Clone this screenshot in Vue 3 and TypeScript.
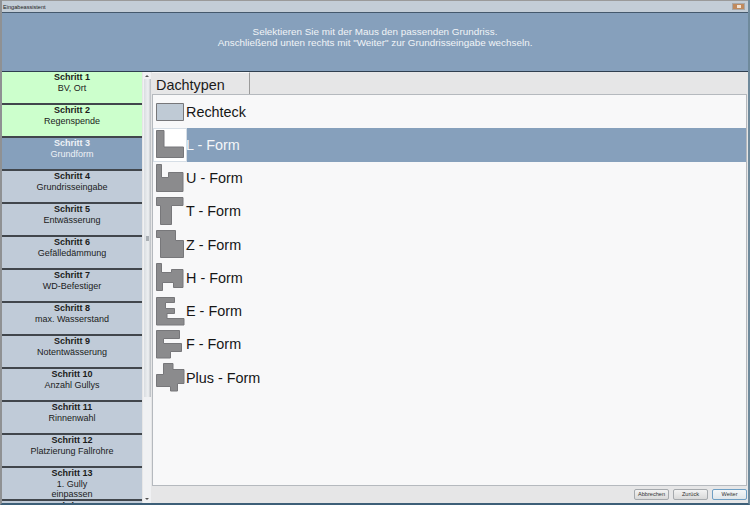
<script setup lang="ts">
interface Shape { name: string; path: string }
const steps: { title: string; lines: string[]; state: string }[] = [
  { title: 'Schritt 1', lines: ['BV, Ort'], state: 'done' },
  { title: 'Schritt 2', lines: ['Regenspende'], state: 'done' },
  { title: 'Schritt 3', lines: ['Grundform'], state: 'active' },
  { title: 'Schritt 4', lines: ['Grundrisseingabe'], state: '' },
  { title: 'Schritt 5', lines: ['Entwässerung'], state: '' },
  { title: 'Schritt 6', lines: ['Gefälledämmung'], state: '' },
  { title: 'Schritt 7', lines: ['WD-Befestiger'], state: '' },
  { title: 'Schritt 8', lines: ['max. Wasserstand'], state: '' },
  { title: 'Schritt 9', lines: ['Notentwässerung'], state: '' },
  { title: 'Schritt 10', lines: ['Anzahl Gullys'], state: '' },
  { title: 'Schritt 11', lines: ['Rinnenwahl'], state: '' },
  { title: 'Schritt 12', lines: ['Platzierung Fallrohre'], state: '' },
  { title: 'Schritt 13', lines: ['1. Gully', 'einpassen'], state: '' },
  { title: 'Schritt 14', lines: [], state: '' },
]
const shapes: Shape[] = [
  { name: 'Rechteck', path: 'M0.5 6.5H27.5V23.5H0.5Z' },
  { name: 'L - Form', path: 'M0.5 0.5H8V17H27.5V27.5H0.5Z' },
  { name: 'U - Form', path: 'M0.5 0.5H5.5V13.5H12.5V8.5H27V27.5H0.5Z' },
  { name: 'T - Form', path: 'M0.5 0.5H27V8.5H15.5V27.5H4.5V8.5H0.5Z' },
  { name: 'Z - Form', path: 'M0.5 0.5H19.5V10.5H27.5V27.5H4.5V7.5H0.5Z' },
  { name: 'H - Form', path: 'M0.5 0.5H5.5V9.5H15.5V6.5H27V24.5H17.5V19.5H6.5V27.5H0.5Z' },
  { name: 'E - Form', path: 'M0.5 0.5H18.5V5.5H9.5V11.5H18.5V16.5H11V21.5H28V28H0.5Z' },
  { name: 'F - Form', path: 'M0.5 0.5H23.5V8.5H7.5V13.5H25.5V21.5H14.5V28H0.5Z' },
  { name: 'Plus - Form', path: 'M7.5 0.5H17V6.5H28V20.5H21.5V28H14.5V23.5H0.5V11.5H7.5Z' },
]
const selected = 'L - Form'
</script>

<template>
  <div class="window">
    <div class="titlebar">
      <span class="title">Eingabeassistent</span>
      <span class="close"><i></i></span>
    </div>
    <div class="frame">
      <header class="banner">
        <p>Selektieren Sie mit der Maus den passenden Grundriss.</p>
        <p>Anschließend unten rechts mit "Weiter" zur Grundrisseingabe wechseln.</p>
      </header>
      <div class="body">
        <nav class="steps">
          <div v-for="s in steps" :key="s.title" class="step" :class="s.state">
            <strong>{{ s.title }}</strong>
            <span v-for="l in s.lines" :key="l">{{ l }}</span>
          </div>
        </nav>
        <div class="scrollbar">
          <span class="arrow up"></span>
          <span class="thumb-bar"><span class="grip"></span></span>
          <span class="arrow down"></span>
        </div>
        <main class="content">
          <div class="tabs"><div class="tab">Dachtypen</div></div>
          <div class="list">
            <div v-for="s in shapes" :key="s.name" class="row" :class="{ selected: s.name === selected }">
              <span class="thumb">
                <svg width="29" height="29" viewBox="0 0 29 29">
                  <path :d="s.path" :fill="s.name === 'Rechteck' ? '#bfcad5' : '#8b8b8d'" stroke="#77777a" stroke-width="1" />
                </svg>
              </span>
              <span class="label">{{ s.name }}</span>
            </div>
          </div>
          <footer class="actions">
            <button>Abbrechen</button>
            <button>Zurück</button>
            <button class="primary">Weiter</button>
          </footer>
        </main>
      </div>
    </div>
  </div>
</template>

<style scoped>
.window {
  width: 750px;
  height: 505px;
  display: flex;
  flex-direction: column;
  box-sizing: border-box;
  background: #b9c5d1;
  font-family: "Liberation Sans", Arial, sans-serif;
  overflow: hidden;
  border-left: 2px solid #8f9193;
  border-right: 2px solid #6f8a9c;
  border-bottom: 2px solid #3d5f78;
}
.titlebar {
  height: 12px;
  flex: none;
  display: flex;
  align-items: center;
  justify-content: space-between;
  padding: 0 3px 0 1px;
  background: #c3cdd7;
  border-top: 1px solid #9a9a9a;
  box-sizing: border-box;
}
.title {
  font-size: 5.6px;
  color: #222;
}
.close {
  width: 13px;
  height: 7px;
  display: flex;
  align-items: center;
  justify-content: center;
  background: #c08a5e;
  border: 1px solid #a8a8a8;
  box-sizing: border-box;
}
.close i {
  width: 4px;
  height: 3px;
  background: #f2e4d6;
}
.frame {
  flex: 1;
  min-height: 0;
  display: flex;
  flex-direction: column;
  background: #e6e6e7;
  border-top: 1px solid #44586c;
}
.banner {
  height: 59px;
  flex: none;
  box-sizing: border-box;
  padding-top: 13px;
  background: #86a0bc;
  border-bottom: 1px solid #2f3f50;
  color: #f1f4f7;
  font-size: 9.9px;
  line-height: 11px;
  text-align: center;
}
.banner p {
  margin: 0;
}
.body {
  flex: 1;
  min-height: 0;
  display: flex;
}
.steps {
  width: 140px;
  flex: none;
  overflow: hidden;
  background: #c0cbd8;
}
.step {
  height: 33px;
  box-sizing: border-box;
  display: flex;
  flex-direction: column;
  align-items: center;
  background: #c0cbd8;
  border-bottom: 2px solid #41464c;
  color: #1b1b1b;
  font-size: 9px;
  line-height: 10.5px;
}
.step strong {
  font-weight: 700;
}
.step.done {
  background: #ccffcc;
}
.step.active {
  background: #86a0bc;
  color: #eef2f6;
}
.scrollbar {
  width: 8px;
  flex: none;
  margin: 0 1px;
  display: flex;
  flex-direction: column;
  align-items: center;
  background: #f0f1f3;
}
.arrow {
  width: 0;
  height: 0;
  flex: none;
  border-left: 2px solid transparent;
  border-right: 2px solid transparent;
}
.arrow.up {
  margin: 3px 0 2px;
  border-bottom: 2px solid #555;
}
.arrow.down {
  margin: auto 0 3px;
  border-top: 2px solid #555;
}
.thumb-bar {
  width: 7px;
  height: 318px;
  flex: none;
  display: flex;
  align-items: center;
  justify-content: center;
  background: linear-gradient(90deg, #d9dde1, #eef0f2 60%, #b8bcc1);
}
.grip {
  width: 3px;
  height: 5px;
  background: #a9aeb3;
}
.content {
  flex: 1;
  min-width: 0;
  display: flex;
  flex-direction: column;
  background: #e6e6e7;
}
.tabs {
  height: 22px;
  flex: none;
  display: flex;
}
.tab {
  width: 98px;
  box-sizing: border-box;
  padding: 3px 0 0 4px;
  font-size: 14.4px;
  line-height: 18px;
  color: #1a1a1a;
  border-right: 1px solid #9a9a9a;
  border-top: 1px solid #f7f7f7;
}
.list {
  height: 392px;
  flex: none;
  box-sizing: border-box;
  margin-right: 1px;
  background: #f8f8f9;
  border: 1px solid #b5b9be;
  overflow: hidden;
}
.row {
  height: 33.25px;
  display: flex;
  align-items: center;
  padding-left: 1px;
  color: #161616;
}
.thumb {
  width: 32px;
  height: 32px;
  flex: none;
  display: flex;
  align-items: center;
  justify-content: center;
  box-sizing: border-box;
}
.label {
  font-size: 14.4px;
  line-height: 18px;
}
.row.selected {
  background: #86a0bc;
  color: #f4f6f8;
}
.row.selected .thumb {
  background: #fff;
  outline: 1px solid #d6dee6;
}
.actions {
  flex: 1;
  display: flex;
  justify-content: flex-end;
  align-items: center;
  gap: 4px;
  padding-right: 1px;
}
button {
  width: 35px;
  height: 11px;
  padding: 0;
  font-family: inherit;
  font-size: 5.6px;
  line-height: 9px;
  color: #333;
  background: linear-gradient(#f3f3f3, #d9d9d9);
  border: 1px solid #a5a9ad;
  border-radius: 2px;
}
button.primary {
  border-color: #6f9fc4;
  background: linear-gradient(#f4f7f9, #e0e6ea);
}
</style>
